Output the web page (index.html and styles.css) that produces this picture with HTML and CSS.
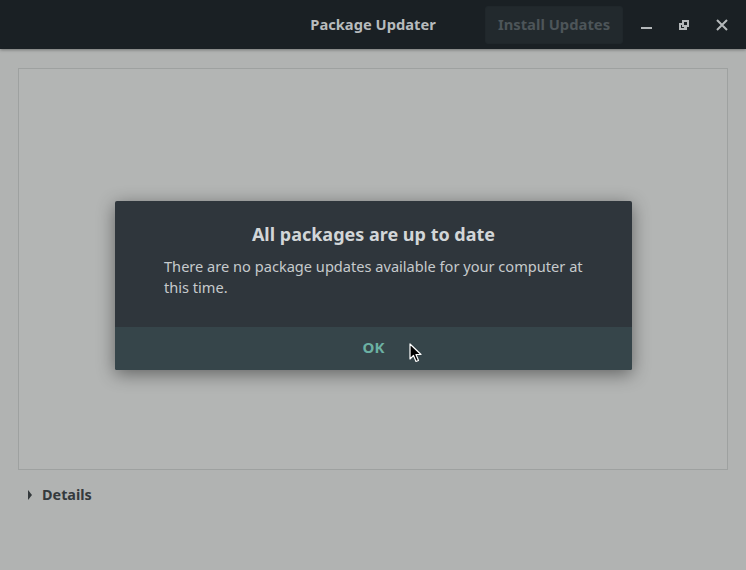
FILE: index.html
```html
<!DOCTYPE html>
<html>
<head>
<meta charset="utf-8">
<link rel="stylesheet" href="styles.css">
</head>
<body>
<div class="window">
  <header class="headerbar">
    <div class="title">Package Updater</div>
    <div class="actions">
      <button class="install">Install Updates</button>
      <span class="wbtn">
        <svg width="12" height="12" viewBox="0 0 12 12"><rect x="1" y="8" width="11" height="2" fill="#b4b8ba"/></svg>
      </span>
      <span class="wbtn">
        <svg width="12" height="12" viewBox="0 0 12 12"><path d="M4 1h7v7h-2v3H1V4h3z M6 3v3h3V3z M3 6v3h3V8H4V6z" fill="#b4b8ba" fill-rule="evenodd"/></svg>
      </span>
      <span class="wbtn">
        <svg width="12" height="12" viewBox="0 0 12 12"><path d="M1 1L11 11M11 1L1 11" stroke="#b4b8ba" stroke-width="2"/></svg>
      </span>
    </div>
  </header>
  <main class="content">
    <div class="frame"></div>
    <div class="details">
      <svg class="arrow" width="6" height="10" viewBox="0 0 6 10"><path d="M1 0L5 5L1 10z" fill="#34393c"/></svg>
      <span>Details</span>
    </div>
  </main>
  <div class="dialog">
    <div class="dialog-body">
      <h1 class="dialog-title">All packages are up to date</h1>
      <p class="dialog-text">There are no package updates available for your computer at this time.</p>
    </div>
    <div class="dialog-actions">
      <span class="ok">OK</span>
    </div>
  </div>
  <svg class="cursor" width="14" height="20" viewBox="0 0 14 20"><path d="M1 1V16L4.5 12.5L7 18.5L9.5 17.5L7 11.5H12Z" fill="#000" stroke="#fff" stroke-width="1.2" stroke-linejoin="round"/></svg>
</div>
</body>
</html>
```

FILE: styles.css
```css
html, body {
  margin: 0;
  padding: 0;
}
body {
  width: 746px;
  height: 570px;
  overflow: hidden;
  background: #b1b3b2;
  font-family: "Noto Sans", "DejaVu Sans", sans-serif;
}
.window {
  position: relative;
  width: 746px;
  height: 570px;
}
.headerbar {
  height: 49px;
  background: #1a2024;
  box-shadow: 0 1px 3px rgba(0,0,0,0.35);
  display: flex;
  align-items: center;
  position: relative;
}
.title {
  position: absolute;
  left: 0;
  right: 0;
  top: 13px;
  text-align: center;
  font-weight: 700;
  font-size: 14.7px;
  line-height: 22px;
  color: #b7bbbd;
  pointer-events: none;
}
.actions {
  margin-left: auto;
  display: flex;
  align-items: center;
  padding-right: 5px;
  position: relative;
}
.install {
  font-family: inherit;
  font-weight: 700;
  font-size: 14.8px;
  color: #4d5559;
  background: #22292d;
  border: 1px solid #20272b;
  border-radius: 3px;
  height: 38px;
  width: 138px;
  padding: 0 0 2px 0;
  margin-right: 4px;
}
.wbtn {
  width: 38px;
  height: 38px;
  display: flex;
  align-items: center;
  justify-content: center;
}
.content {
  padding: 19px 18px 0 18px;
}
.frame {
  height: 400px;
  border: 1px solid #9ea1a0;
  background: #b3b5b4;
}
.details {
  display: flex;
  align-items: center;
  margin-top: 15px;
  padding-left: 9px;
  font-weight: 700;
  font-size: 14.4px;
  color: #34393c;
}
.arrow {
  margin-right: 9px;
}
.dialog {
  position: absolute;
  left: 115px;
  top: 201px;
  width: 517px;
  height: 169px;
  background: #2f363c;
  border-radius: 2px;
  box-shadow: 0 4px 18px rgba(0,0,0,0.45);
  display: flex;
  flex-direction: column;
  overflow: hidden;
}
.dialog-body {
  flex: 1;
  padding: 20px 49px 0 49px;
}
.dialog-title {
  margin: 0;
  text-align: center;
  font-size: 18px;
  font-weight: 700;
  color: #d2d6d8;
  line-height: 26px;
}
.dialog-text {
  margin: 9px 0 0 0;
  font-size: 14.6px;
  line-height: 21px;
  color: #c6cacc;
}
.dialog-actions {
  height: 43px;
  background: #36454a;
  display: flex;
  align-items: center;
  justify-content: center;
  padding-bottom: 4px;
  box-sizing: border-box;
}
.ok {
  font-weight: 700;
  font-size: 15px;
  color: #6cb1a3;
}
.cursor {
  position: absolute;
  left: 409px;
  top: 343px;
}
```
